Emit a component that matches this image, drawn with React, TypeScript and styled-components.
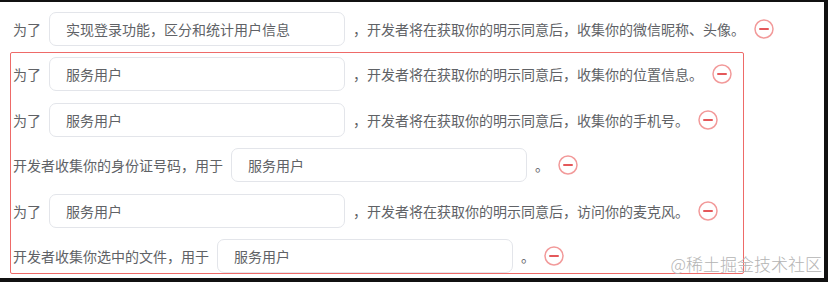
import styled, { createGlobalStyle } from 'styled-components';

interface RowData {
    id: number;
    before: string;
    value: string;
    after: string;
}

const firstRow: RowData = {
    id: 0,
    before: '为了',
    value: '实现登录功能，区分和统计用户信息',
    after: '，开发者将在获取你的明示同意后，收集你的微信昵称、头像。',
};

const boxedRows: RowData[] = [
    { id: 1, before: '为了', value: '服务用户', after: '，开发者将在获取你的明示同意后，收集你的位置信息。' },
    { id: 2, before: '为了', value: '服务用户', after: '，开发者将在获取你的明示同意后，收集你的手机号。' },
    { id: 3, before: '开发者收集你的身份证号码，用于', value: '服务用户', after: '。' },
    { id: 4, before: '为了', value: '服务用户', after: '，开发者将在获取你的明示同意后，访问你的麦克风。' },
    { id: 5, before: '开发者收集你选中的文件，用于', value: '服务用户', after: '。' },
];

const MinusIcon = () => (
    <svg width="20" height="20" viewBox="0 0 20 20">
        <circle cx="10" cy="10" r="9" fill="none" stroke="#f29a9a" strokeWidth="1.5" />
        <line x1="6" y1="10" x2="14" y2="10" stroke="#e4585a" strokeWidth="2" strokeLinecap="round" />
    </svg>
);

const Row = ({ before, value, after }: RowData) => {
    return (
        <RowContainer>
            <Label>{before}</Label>
            <Field>{value}</Field>
            <Label>{after}</Label>
            <RemoveButton>
                <MinusIcon />
            </RemoveButton>
        </RowContainer>
    );
};

const App = () => {
    return (
        <>
            <GlobalStyle />
            <Frame>
                <FirstLine>
                    <Row {...firstRow} />
                </FirstLine>
                <SelectedBox>
                    {boxedRows.map((row) => (
                        <Row key={row.id} {...row} />
                    ))}
                </SelectedBox>
                <Watermark>@稀土掘金技术社区</Watermark>
            </Frame>
        </>
    );
};

const GlobalStyle = createGlobalStyle`
    html, body {
        margin: 0;
        padding: 0;
        background: #ffffff;
    }
`;

const Frame = styled.div`
    position: relative;
    width: 828px;
    height: 282px;
    box-sizing: border-box;
    border-top: 2px solid #111;
    border-right: 4px solid #111;
    border-bottom: 4px solid #111;
    padding: 10px 0 0 10px;
    background: #fff;
    overflow: hidden;
    font-family: 'Noto Sans CJK SC', 'Liberation Sans', sans-serif;
    font-size: 14px;
    color: #606266;
`;

const FirstLine = styled.div`
    padding-left: 3px;
`;

const SelectedBox = styled.div`
    margin-top: 6px;
    width: 734px;
    height: 222px;
    box-sizing: border-box;
    border: 1px solid #ee6a68;
    border-radius: 2px;
    padding: 4px 0 0 2px;
    display: flex;
    flex-direction: column;
    gap: 11.5px;
`;

const RowContainer = styled.div`
    display: flex;
    align-items: center;
    height: 34px;
    white-space: nowrap;
`;

const Label = styled.span`
    line-height: 34px;
`;

const Field = styled.div`
    width: 296px;
    height: 34px;
    box-sizing: border-box;
    margin: 0 8px;
    padding-left: 16px;
    border: 1px solid #e3e5ea;
    border-radius: 7px;
    display: flex;
    align-items: center;
    color: #606266;
`;

const RemoveButton = styled.span`
    display: flex;
    margin-left: 9px;
    cursor: pointer;
`;

const Watermark = styled.div`
    position: absolute;
    right: 2px;
    bottom: 2px;
    font-family: 'Noto Sans CJK SC', sans-serif;
    font-weight: 300;
    font-size: 17px;
    color: #b4b4b4;
`;

export default App;
